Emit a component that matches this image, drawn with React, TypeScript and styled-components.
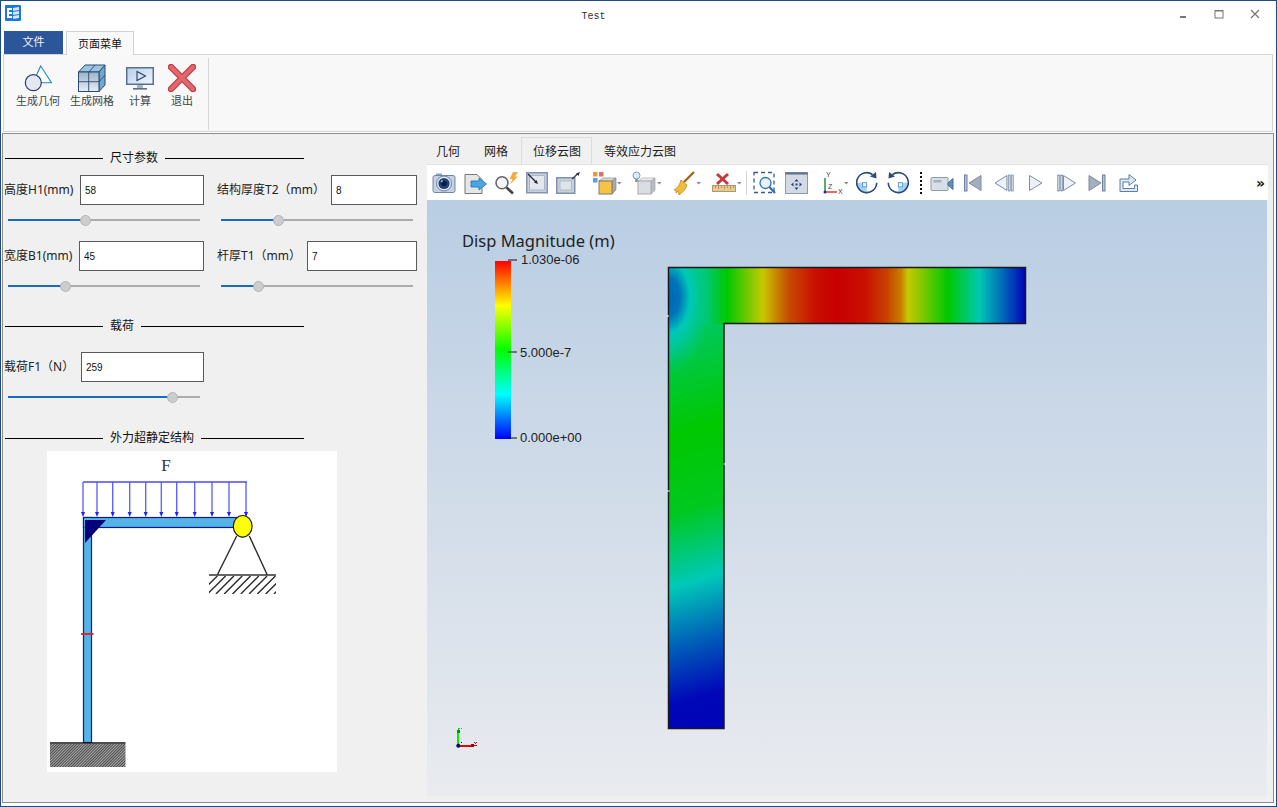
import React from 'react'
import styled, { createGlobalStyle } from 'styled-components'

const GlobalStyle = createGlobalStyle`
    html, body {
        margin: 0;
        padding: 0;
        overflow: hidden;
        background: #fff;
    }
    body {
        font-family: "Liberation Sans", "Noto Sans CJK SC", sans-serif;
    }
`;

const Frame = styled.div`
    width: 1277px;
    height: 807px;
    box-sizing: border-box;
    border: 1px solid #1d4a80;
    background: #fff;
    display: flex;
    flex-direction: column;
    color: #222;
`;

const TitleBar = styled.div`
    height: 30px;
    flex: none;
    display: flex;
`;

const AppIcon = styled.svg`
    width: 16px;
    height: 16px;
    margin: 4px 1px 0 4px;
`;

const WindowTitle = styled.div`
    flex: 1;
    text-align: center;
    font-family: "Liberation Mono", monospace;
    font-size: 10px;
    line-height: 30px;
    padding-top: 1px;
    color: #333;
`;

const WindowButtons = styled.div`
    display: flex;
    margin-right: 3px;
`;

const WindowButton = styled.div`
    width: 36px;
    height: 26px;
    display: flex;
    align-items: center;
    justify-content: center;
`;

const MenuTabs = styled.div`
    height: 24px;
    flex: none;
    display: flex;
    gap: 3px;
    padding-left: 3px;
    position: relative;
    z-index: 1;
`;

const FileTab = styled.div`
    width: 59px;
    height: 23px;
    background: #2b579a;
    color: #f4f4f4;
    font-size: 11px;
    line-height: 23px;
    text-align: center;
`;

const PageTab = styled.div`
    width: 68px;
    height: 24px;
    box-sizing: border-box;
    border: 1px solid #d2d2d2;
    border-bottom: none;
    background: #f9f9f9;
    color: #111;
    font-size: 11px;
    line-height: 24px;
    text-align: center;
`;

const Ribbon = styled.div`
    height: 78px;
    flex: none;
    box-sizing: border-box;
    margin: -1px 3px 0 2px;
    border: 1px solid #d2d2d2;
    background: #f8f8f8;
    display: flex;
    padding: 3px 0 0 7px;
`;

const RibbonButton = styled.div<{ $w: number }>`
    width: ${p => p.$w}px;
    display: flex;
    flex-direction: column;
    align-items: center;
    padding-top: 6px;
    font-size: 11px;
    color: #444;
`;

const RibbonIcon = styled.svg`
    width: 28px;
    height: 28px;
    margin-bottom: 2px;
`;

const RibbonLabel = styled.div`
    line-height: 14px;
    white-space: nowrap;
`;

const RibbonSep = styled.div`
    width: 1px;
    height: 72px;
    margin-left: 5px;
    background: #d6d6d6;
`;

const Body = styled.div`
    flex: 1;
    min-height: 0;
    margin: 1px 2px 3px 1px;
    border: 1px solid #8c8c8c;
    background: #f0f0f0;
    display: flex;
`;

const LeftPanel = styled.div`
    width: 421px;
    flex: none;
    box-sizing: border-box;
    padding: 16px 0 0 1px;
`;

const SectionTitle = styled.div<{ $mt?: number }>`
    width: 299px;
    height: 16px;
    margin: ${p => p.$mt ?? 0}px 0 0 1px;
    display: flex;
    align-items: center;
    font-size: 12px;
    color: #111;
`;

const TitleLeadLine = styled.div`
    width: 98px;
    height: 1px;
    background: #000;
`;

const TitleLine = styled.div`
    flex: 1;
    height: 1px;
    background: #000;
`;

const TitleText = styled.span`
    margin: 0 7px;
    line-height: 16px;
`;

const ParamRow = styled.div<{ $mt: number }>`
    display: flex;
    gap: 13px;
    margin-top: ${p => p.$mt}px;
`;

const Field = styled.div`
    width: 200px;
    height: 30px;
    display: flex;
    align-items: center;
    justify-content: space-between;
    font-family: "Noto Sans", "Noto Sans CJK SC", sans-serif;
    font-size: 12px;
    color: #222;
    white-space: nowrap;
`;

const FieldLabel = styled.span`
    line-height: 16px;
    margin-bottom: 1px;
`;

const ValueInput = styled.input<{ $w: number }>`
    width: ${p => p.$w}px;
    height: 30px;
    box-sizing: border-box;
    border: 1px solid #5a5a5a;
    border-radius: 0;
    outline: none;
    padding: 0 0 0 4px;
    background: #fff;
    font-family: "Liberation Sans", sans-serif;
    font-size: 10px;
    color: #111;
`;

const SliderRow = styled.div<{ $mt: number }>`
    display: flex;
    gap: 13px;
    margin-top: ${p => p.$mt}px;
`;

const SliderTrack = styled.div`
    position: relative;
    width: 192px;
    height: 2px;
    margin: 5px 4px;
    background: #ababab;
`;

const SliderFill = styled.div<{ $at: number }>`
    width: ${p => p.$at}px;
    height: 2px;
    background: #1a6bb8;
`;

const SliderHandle = styled.div<{ $at: number }>`
    position: absolute;
    left: ${p => p.$at - 5.5}px;
    top: -4.5px;
    width: 11px;
    height: 11px;
    box-sizing: border-box;
    border-radius: 50%;
    border: 1px solid #b4b4b4;
    background: #cdcdcd;
`;

const Diagram = styled.svg`
    display: block;
    width: 290px;
    height: 321px;
    margin: 5px 0 0 43px;
    background: #fff;
`;

const RightPanel = styled.div`
    flex: 1;
    min-width: 0;
    display: flex;
    flex-direction: column;
`;

const TabBar = styled.div`
    height: 27px;
    margin-top: 3px;
    display: flex;
    flex: none;
`;

const ViewTab = styled.div<{ $active?: boolean }>`
    box-sizing: border-box;
    margin-left: ${p => (p.$active ? 1 : 0)}px;
    padding: 1px ${p => (p.$active ? 10 : 11)}px 0 11px;
    border: 1px solid ${p => (p.$active ? '#dcdcdc' : 'transparent')};
    border-bottom: none;
    font-size: 12px;
    line-height: 26px;
    color: #222;
`;

const Pane = styled.div`
    width: 841px;
    margin-left: 3px;
    border-top: 1px solid #e2e2e2;
`;

const Toolbar = styled.div`
    height: 35px;
    background: #fff;
    display: flex;
    align-items: center;
    padding-left: 5px;
    padding-right: 3px;
`;

const ToolIcon = styled.svg<{ $w: number; $ml: number }>`
    flex: none;
    width: ${p => p.$w}px;
    height: 25px;
    margin-left: ${p => p.$ml}px;
`;

const ToolSep = styled.div<{ $ml: number }>`
    flex: none;
    width: 1px;
    height: 24px;
    margin-left: ${p => p.$ml}px;
    background: #d4d4d4;
`;

const DottedSep = styled.div<{ $ml: number }>`
    flex: none;
    width: 2px;
    height: 22px;
    margin-left: ${p => p.$ml}px;
    background: repeating-linear-gradient(to bottom, #111 0, #111 2px, transparent 2px, transparent 4px);
`;

const MoreButton = styled.div`
    margin-left: auto;
    font-family: "DejaVu Sans", sans-serif;
    font-size: 14px;
    line-height: 14px;
    font-weight: bold;
    color: #111;
`;

const Viewport = styled.div`
    width: 840px;
    height: 596px;
    background: linear-gradient(to bottom, #b9cde3 0%, #e9ebef 100%);
`;

const PlotSvg = styled.svg`
    display: block;
    width: 840px;
    height: 596px;
`;

const Slider: React.FC<{ handle: number }> = ({ handle }) => {
    // handle is measured from the start of the track
    return (
        <SliderTrack>
            <SliderFill $at={handle} />
            <SliderHandle $at={handle} />
        </SliderTrack>
    )
}

const Section: React.FC<{ text: string; mt?: number }> = ({ text, mt }) => (
    <SectionTitle $mt={mt}>
        <TitleLeadLine />
        <TitleText>{text}</TitleText>
        <TitleLine />
    </SectionTitle>
)

const Arrowed: React.FC<{ fill?: string }> = ({ fill = '#8a8a8a' }) => (
    <polygon points="25,12 29.5,12 27.25,14.5" fill={fill} />
)

const toolIcons = {
    camera: (
        <>
            <rect x="4" y="3.5" width="6" height="2.5" fill="#8fa3bd" />
            <rect x="1" y="5.5" width="22" height="17" rx="2" fill="#c6d2e2" stroke="#7088a8" />
            <circle cx="12" cy="13.5" r="7.5" fill="#e2e9f2" stroke="#6a82a4" />
            <circle cx="12" cy="13.5" r="5.6" fill="#24427a" />
            <circle cx="12" cy="13.5" r="2.8" fill="#0c1c40" />
            <circle cx="9.8" cy="11.2" r="1" fill="#9fc0e8" />
        </>
    ),
    exportImage: (
        <>
            <path d="M1 4.5 H13 L18 9.5 V23.5 H1 Z" fill="#e6e6e6" stroke="#777" />
            <path d="M7 11 H15 V8 L22.5 14 L15 20 V17 H7 Z" fill="#4aa5e2" stroke="#2f80bb" />
        </>
    ),
    boltSearch: (
        <>
            <circle cx="7" cy="12.7" r="6" fill="#f2f5f9" stroke="#666" strokeWidth="1.6" />
            <line x1="11.5" y1="17.5" x2="18" y2="23.5" stroke="#444" strokeWidth="2.6" />
            <polygon points="18,2 23,2 20,6.5 23,6.5 15,14.5 17.5,9 14.5,9" fill="#f3ab40" />
        </>
    ),
    boxIn: (
        <>
            <rect x="0.75" y="2.75" width="20.5" height="20" fill="#c8d0dc" stroke="#8496b0" strokeWidth="1.5" />
            <rect x="3.5" y="5.5" width="15" height="14.5" fill="#e4e8ee" stroke="#a9b6c8" />
            <line x1="2" y1="4" x2="10" y2="12" stroke="#223" strokeWidth="1.2" />
            <polygon points="12,14 8,12.5 10.5,10" fill="#223" />
        </>
    ),
    boxOut: (
        <>
            <rect x="0.75" y="7.75" width="18" height="15.5" fill="#c8d0dc" stroke="#7f93b0" strokeWidth="1.5" />
            <rect x="4" y="11" width="11.5" height="9" fill="#dfe4ea" stroke="#b0bac8" />
            <line x1="16" y1="9" x2="22" y2="3.5" stroke="#334" strokeWidth="1.2" />
            <polygon points="24,2 22.5,6 20,3.5" fill="#334" />
        </>
    ),
    colorCube: (
        <>
            <rect x="1" y="2" width="4.5" height="4.5" fill="#e89a3c" />
            <rect x="7" y="2" width="4.5" height="4.5" fill="#d9706c" />
            <rect x="1" y="8" width="4.5" height="4.5" fill="#5aa0e0" />
            <polygon points="7,11 11,8 24,8 20,11" fill="#dcdcdc" stroke="#888" strokeWidth="0.7" />
            <polygon points="20,11 24,8 24,20 20,24" fill="#a8a8a8" stroke="#888" strokeWidth="0.7" />
            <rect x="7" y="11" width="13" height="13" fill="#f6c440" stroke="#7a7a7a" />
            <Arrowed />
        </>
    ),
    bulbCube: (
        <>
            <polygon points="6,11 10,8 23,8 19,11" fill="#eceef2" stroke="#aaa" strokeWidth="0.7" />
            <polygon points="19,11 23,8 23,20 19,24" fill="#b8bcc4" stroke="#a0a0a0" strokeWidth="0.7" />
            <rect x="6" y="11" width="13" height="13" fill="#dadee4" stroke="#aaa" />
            <circle cx="4.5" cy="5.5" r="3.5" fill="#d8eefc" stroke="#7a9cc0" />
            <rect x="3.2" y="9" width="2.6" height="3" fill="#8a8a8a" />
            <Arrowed />
        </>
    ),
    broom: (
        <>
            <line x1="21" y1="2" x2="11" y2="12" stroke="#a5651e" strokeWidth="2.4" />
            <path d="M8 10 L14 15 C13 19 10 22 6 25 L5 21 L3 23 L3 20 L1 20 C5 18 7 14 8 10 Z" fill="#f0bc3c" stroke="#c08a20" strokeWidth="0.8" />
            <polygon points="23.5,12 28,12 25.75,14.5" fill="#8a8a8a" />
        </>
    ),
    ruler: (
        <>
            <line x1="5" y1="4" x2="16" y2="14" stroke="#c8383c" strokeWidth="3" />
            <line x1="16" y1="4" x2="5" y2="14" stroke="#c8383c" strokeWidth="3" />
            <rect x="0.5" y="15.5" width="23" height="6" fill="#e6ca92" stroke="#b09868" />
            <path d="M3.5 16 V18 M6.5 16 V19 M9.5 16 V18 M12.5 16 V19 M15.5 16 V18 M18.5 16 V19 M21.5 16 V18" stroke="#9a8050" strokeWidth="0.7" />
            <Arrowed />
        </>
    ),
    zoomBox: (
        <>
            <rect x="1" y="2.5" width="20" height="20" fill="none" stroke="#3a5a90" strokeWidth="1.3" strokeDasharray="4 3" />
            <circle cx="12.5" cy="13" r="5.5" fill="#e8f2fb" stroke="#2a70b8" strokeWidth="1.3" />
            <line x1="16.5" y1="17" x2="22" y2="23" stroke="#2a70b8" strokeWidth="2.2" />
        </>
    ),
    fit: (
        <>
            <rect x="0.5" y="2.5" width="22" height="21" fill="#d4dae4" stroke="#8a9ab0" />
            <rect x="0.5" y="2.5" width="22" height="2" fill="#5a7090" />
            <path d="M11.5 9 L13.5 11.5 H9.5 Z M11.5 20 L13.5 17.5 H9.5 Z M6 14.5 L8.5 12.5 V16.5 Z M17 14.5 L14.5 12.5 V16.5 Z" fill="#24427a" />
            <rect x="10.5" y="13.5" width="2" height="2" fill="#24427a" />
        </>
    ),
    axes: (
        <>
            <line x1="4" y1="8" x2="4" y2="22" stroke="#2a9a4a" strokeWidth="1.6" />
            <line x1="4" y1="22" x2="16" y2="22" stroke="#d83030" strokeWidth="1.4" />
            <circle cx="4" cy="22" r="1.5" fill="#2030a0" />
            <text x="5" y="7" fontSize="7" fill="#444" fontFamily="Liberation Sans">Y</text>
            <text x="7" y="19" fontSize="7" fill="#444" fontFamily="Liberation Sans">Z</text>
            <text x="17" y="24" fontSize="7" fill="#444" fontFamily="Liberation Sans">X</text>
            <polygon points="23,12 27.5,12 25.25,14.5" fill="#8a8a8a" />
        </>
    ),
    rotateCw: (
        <>
            <path d="M10.7 12.7 V22.7 A10 10 0 0 1 0.7 12.7 Z" fill="#a6d2f4" />
            <rect x="6.5" y="12.7" width="4.2" height="4.2" fill="#e8f4fc" stroke="#4a8ecc" strokeWidth="0.8" />
            <path d="M16.5 4.5 A10 10 0 1 0 20.7 12.7" fill="none" stroke="#2a4a78" strokeWidth="1.6" />
            <polygon points="20,2 20.5,8.5 14,6.5" fill="#2a4a78" />
        </>
    ),
    rotateCcw: (
        <>
            <path d="M11.3 12.7 V22.7 A10 10 0 0 0 21.3 12.7 Z" fill="#a6d2f4" />
            <rect x="11.3" y="12.7" width="4.2" height="4.2" fill="#e8f4fc" stroke="#4a8ecc" strokeWidth="0.8" />
            <path d="M5.5 4.5 A10 10 0 1 1 1.3 12.7" fill="none" stroke="#2a4a78" strokeWidth="1.6" />
            <polygon points="2,2 1.5,8.5 8,6.5" fill="#2a4a78" />
        </>
    ),
    movie: (
        <>
            <rect x="1" y="7.5" width="17" height="13" rx="1" fill="#dadfe6" stroke="#8a9ab0" />
            <rect x="3.5" y="10" width="8" height="2.5" fill="#a8b0bc" />
            <polygon points="18,13 23,8.5 23,19.5 18,15" fill="#5a90c0" stroke="#4a6a90" />
        </>
    ),
    first: (
        <>
            <rect x="0.5" y="5" width="2.5" height="16" fill="#b8c4d8" stroke="#6a80a8" />
            <polygon points="17,5.5 5,13 17,20.5" fill="#a4aebc" stroke="#7a8ca8" />
        </>
    ),
    prev: (
        <>
            <polygon points="13,5.5 1,13 13,20.5" fill="#eef1f5" stroke="#7a8ca8" />
            <rect x="14.5" y="5" width="1.8" height="16" fill="#cfd8e6" stroke="#7a8ca8" strokeWidth="0.7" />
            <rect x="17.5" y="5" width="1.8" height="16" fill="#cfd8e6" stroke="#7a8ca8" strokeWidth="0.7" />
        </>
    ),
    play: <polygon points="1.5,5.5 14,13 1.5,20.5" fill="#eef1f5" stroke="#7a8ca8" />,
    next: (
        <>
            <rect x="0.7" y="5" width="1.8" height="16" fill="#cfd8e6" stroke="#7a8ca8" strokeWidth="0.7" />
            <rect x="3.7" y="5" width="1.8" height="16" fill="#cfd8e6" stroke="#7a8ca8" strokeWidth="0.7" />
            <polygon points="6.5,5.5 18.5,13 6.5,20.5" fill="#eef1f5" stroke="#7a8ca8" />
        </>
    ),
    last: (
        <>
            <polygon points="1,5.5 13,13 1,20.5" fill="#a4aebc" stroke="#7a8ca8" />
            <rect x="14.5" y="5" width="2.5" height="16" fill="#b8c4d8" stroke="#6a80a8" />
        </>
    ),
    share: (
        <path d="M2 21.5 V9 H11 V4.5 L18 10 L11 15.5 V12 H5 V18.5 H16.5 V15 H19.5 V21.5 Z" fill="#dce8f4" stroke="#5a7fa8" strokeLinejoin="round" />
    ),
};

type Tool = [keyof typeof toolIcons, number, number];

// width and left gap of each tool icon, read off the reference
const toolsA: Tool[] = [
    ['camera', 24, 0],
    ['exportImage', 23, 8],
    ['boltSearch', 23, 8],
    ['boxIn', 22, 8],
    ['boxOut', 24, 8],
    ['colorCube', 30, 12],
    ['bulbCube', 30, 10],
    ['broom', 30, 11],
    ['ruler', 30, 9],
];

const toolsB: Tool[] = [
    ['zoomBox', 23, 6],
    ['fit', 23, 9],
    ['axes', 29, 13],
    ['rotateCw', 22, 6],
    ['rotateCcw', 22, 9],
];

const toolsC: Tool[] = [
    ['movie', 24, 8],
    ['first', 18, 10],
    ['prev', 20, 12],
    ['play', 15, 14],
    ['next', 19, 14],
    ['last', 18, 12],
    ['share', 21, 12],
];

const renderTools = (list: Tool[]) =>
    list.map(([name, w, ml]) => (
        <ToolIcon key={name} $w={w} $ml={ml} viewBox={`0 0 ${w} 25`}>
            {toolIcons[name]}
        </ToolIcon>
    ))

const loadArrows = [83, 97, 112.7, 129.7, 145.7, 161.3, 176.7, 194.7, 212, 229, 246];
const hatchTops = [217.3, 225.6, 233.9, 242.2, 250.5, 258.8, 267.1, 275.4, 283.7, 292];

const StructureDrawing: React.FC = () => (
    <Diagram viewBox="47 451 290 321">
        <defs>
            <pattern id="groundHatch" width="2" height="2" patternUnits="userSpaceOnUse" patternTransform="rotate(45)">
                <rect width="2" height="2" fill="#a8a8a8" />
                <rect width="1" height="2" fill="#4a4a4a" />
            </pattern>
            <clipPath id="hatchClip">
                <rect x="209" y="576" width="67" height="18" />
            </clipPath>
        </defs>
        <text x="166" y="471" textAnchor="middle" fontFamily="Liberation Serif" fontSize="17" fill="#333">F</text>
        <line x1="83" y1="482" x2="247" y2="482" stroke="#4848ff" strokeWidth="1.4" />
        {loadArrows.map(x => (
            <g key={x}>
                <line x1={x} y1="482" x2={x} y2="513" stroke="#5a5aff" strokeWidth="1.3" />
                <polygon points={`${x - 2},512 ${x + 2},512 ${x},517`} fill="#2020ff" />
            </g>
        ))}
        <rect x="83.5" y="517.5" width="8" height="225" fill="#55b4e6" stroke="#101a90" strokeWidth="1.2" />
        <rect x="83.5" y="517.5" width="158" height="10" fill="#55b4e6" stroke="#101a90" strokeWidth="1.2" />
        <rect x="84.5" y="518.5" width="6.5" height="10" fill="#55b4e6" />
        <polygon points="85,520 106,520 85,543" fill="#00007c" />
        <line x1="81" y1="634" x2="93.5" y2="634" stroke="#f01818" strokeWidth="1.8" />
        <line x1="236.7" y1="536" x2="217.3" y2="575" stroke="#2a2a2a" strokeWidth="1.4" />
        <line x1="249.3" y1="536" x2="267.3" y2="575" stroke="#2a2a2a" strokeWidth="1.4" />
        <ellipse cx="242.7" cy="526.3" rx="9.4" ry="10.8" fill="#ffff00" stroke="#222" strokeWidth="1.2" />
        <line x1="209" y1="575" x2="276" y2="575" stroke="#333" strokeWidth="1.5" />
        <g clipPath="url(#hatchClip)">
            {hatchTops.map(x => (
                <line key={x} x1={x} y1="576" x2={x - 18} y2="594" stroke="#2a2a2a" strokeWidth="1.4" />
            ))}
        </g>
        <line x1="50" y1="743" x2="125.5" y2="743" stroke="#111" strokeWidth="1.6" />
        <rect x="50" y="744" width="75.5" height="23" fill="url(#groundHatch)" />
    </Diagram>
)

const ContourPlot: React.FC = () => (
    <PlotSvg viewBox="427 200 840 596">
        <defs>
            <linearGradient id="legendRamp" x1="0" y1="0" x2="0" y2="1">
                <stop offset="0" stopColor="#ff0000" />
                <stop offset="0.25" stopColor="#ffff00" />
                <stop offset="0.5" stopColor="#00ff00" />
                <stop offset="0.75" stopColor="#00ffff" />
                <stop offset="1" stopColor="#0000ff" />
            </linearGradient>
            <linearGradient id="beamRamp" gradientUnits="userSpaceOnUse" x1="668" y1="0" x2="1026" y2="0">
                <stop offset="0" stopColor="#00c8b4" />
                <stop offset="0.1" stopColor="#00c880" />
                <stop offset="0.165" stopColor="#00c800" />
                <stop offset="0.265" stopColor="#c8c800" />
                <stop offset="0.31" stopColor="#c87800" />
                <stop offset="0.34" stopColor="#c84800" />
                <stop offset="0.41" stopColor="#c81000" />
                <stop offset="0.47" stopColor="#c80000" />
                <stop offset="0.55" stopColor="#c81000" />
                <stop offset="0.61" stopColor="#c84000" />
                <stop offset="0.65" stopColor="#c87c00" />
                <stop offset="0.67" stopColor="#c8c800" />
                <stop offset="0.78" stopColor="#00c800" />
                <stop offset="0.87" stopColor="#00c8b4" />
                <stop offset="0.93" stopColor="#0070b8" />
                <stop offset="1" stopColor="#0000b8" />
            </linearGradient>
            <linearGradient id="columnRamp" gradientUnits="userSpaceOnUse" x1="696" y1="324" x2="817.8" y2="726">
                <stop offset="0" stopColor="#00c860" />
                <stop offset="0.24" stopColor="#00c800" />
                <stop offset="0.42" stopColor="#00c820" />
                <stop offset="0.585" stopColor="#00c8b8" />
                <stop offset="0.72" stopColor="#0060b8" />
                <stop offset="0.85" stopColor="#0008b8" />
                <stop offset="1" stopColor="#0000b8" />
            </linearGradient>
            <radialGradient id="cornerRamp" gradientUnits="userSpaceOnUse" cx="0" cy="0" r="1" gradientTransform="translate(668 297) scale(58 97)">
                <stop offset="0" stopColor="#0064b8" />
                <stop offset="0.2" stopColor="#0074b8" />
                <stop offset="0.38" stopColor="#00c8b8" />
                <stop offset="0.56" stopColor="#00c888" />
                <stop offset="0.8" stopColor="#00c860" stopOpacity="0" />
            </radialGradient>
            <clipPath id="frameClip">
                <path d="M668 267 H1026 V324 H724 V729 H668 Z" />
            </clipPath>
        </defs>

        <text x="462" y="246.5" fontFamily="Noto Sans" fontSize="16.5" fill="#222">Disp Magnitude (m)</text>
        <rect x="495" y="261" width="16" height="178" fill="url(#legendRamp)" />
        <line x1="508" y1="260" x2="517" y2="260" stroke="#111" />
        <line x1="508" y1="352" x2="517" y2="352" stroke="#111" />
        <line x1="508" y1="438" x2="517" y2="438" stroke="#111" />
        <text x="521" y="264" fontFamily="Liberation Sans" fontSize="13" fill="#222">1.030e-06</text>
        <text x="520" y="356.5" fontFamily="Liberation Sans" fontSize="13" fill="#222">5.000e-7</text>
        <text x="520" y="442" fontFamily="Liberation Sans" fontSize="13" fill="#222">0.000e+00</text>

        <g clipPath="url(#frameClip)">
            <rect x="668" y="267" width="358" height="57" fill="url(#beamRamp)" />
            <rect x="668" y="324" width="56" height="405" fill="url(#columnRamp)" />
            <ellipse cx="668" cy="297" rx="58" ry="97" fill="url(#cornerRamp)" />
        </g>
        <path d="M668.5 267.5 H1025.5 V323.5 H724 V728.5 H668.5 Z" fill="none" stroke="#1a1a1a" strokeWidth="1.5" />
        <rect x="666.5" y="315.5" width="2.5" height="1" fill="#fff" />
        <rect x="723.5" y="463.5" width="2.5" height="1" fill="#fff" />
        <rect x="667" y="490.5" width="2.5" height="1" fill="#fff" />

        <line x1="458" y1="745" x2="458" y2="730" stroke="#00f000" strokeWidth="2" />
        <rect x="457" y="730" width="3" height="3" fill="#009000" />
        <line x1="458" y1="746" x2="472" y2="746" stroke="#f00000" strokeWidth="2" />
        <line x1="472" y1="745.5" x2="477" y2="745.5" stroke="#d00000" strokeWidth="1" />
        <rect x="471" y="744" width="3" height="3" fill="#a00000" />
        <circle cx="458.3" cy="745.7" r="2" fill="#000080" />
        <path d="M458 728.5 h2 M458 729.5 h1 M461 728.5 h1" stroke="#00e000" strokeWidth="1" />
        <path d="M474 742.5 h1 M476 742.5 h1 M475 743.5 h1" stroke="#f00000" strokeWidth="1" />
        <path d="M461 742.5 h1" stroke="#0000c0" strokeWidth="1" />
    </PlotSvg>
)

const App: React.FC = () => {
    return (
        <Frame>
            <GlobalStyle />
            <TitleBar>
                <AppIcon viewBox="0 0 16 16">
                    <rect width="16" height="16" rx="1" fill="#1d76e4" />
                    <path d="M2 3 H7 V5 H4 V7 H7 V9 H4 V11 H7 V13 H2 Z" fill="#fff" />
                    <path d="M8 3 L14 2 V5 L8 6 Z M8 7 L14 6 V9 L8 10 Z M8 11 L14 10 V13 L8 14 Z" fill="#d8e8fb" />
                </AppIcon>
                <WindowTitle>Test</WindowTitle>
                <WindowButtons>
                    <WindowButton>
                        <svg width="10" height="10" viewBox="0 0 10 10"><rect x="2" y="7" width="6" height="2" fill="#777" /></svg>
                    </WindowButton>
                    <WindowButton>
                        <svg width="10" height="10" viewBox="0 0 10 10">
                            <rect x="1" y="1.5" width="8" height="7.5" fill="none" stroke="#777" />
                            <rect x="1" y="1" width="8" height="1.5" fill="#777" />
                        </svg>
                    </WindowButton>
                    <WindowButton>
                        <svg width="10" height="10" viewBox="0 0 10 10">
                            <path d="M1 1 L9 9 M9 1 L1 9" stroke="#777" strokeWidth="1.2" />
                        </svg>
                    </WindowButton>
                </WindowButtons>
            </TitleBar>

            <MenuTabs>
                <FileTab>文件</FileTab>
                <PageTab>页面菜单</PageTab>
            </MenuTabs>

            <Ribbon>
                <RibbonButton $w={54}>
                    <RibbonIcon viewBox="0 0 28 28">
                        <polygon points="16.7,2 27.5,18.7 9,18.7" fill="#fff" stroke="#1f8ac0" strokeWidth="1.1" />
                        <circle cx="9.3" cy="18.7" r="8" fill="#e4e8f0" stroke="#2b3f66" strokeWidth="1.2" />
                    </RibbonIcon>
                    <RibbonLabel>生成几何</RibbonLabel>
                </RibbonButton>
                <RibbonButton $w={54}>
                    <RibbonIcon viewBox="0 0 28 28">
                        <defs>
                            <linearGradient id="meshFront" x1="0" y1="0" x2="0" y2="1">
                                <stop offset="0" stopColor="#9db2c6" />
                                <stop offset="1" stopColor="#e8eef4" />
                            </linearGradient>
                        </defs>
                        <polygon points="0.5,8 7,1 27,1 21,8" fill="#9cc6de" stroke="#2a4a78" />
                        <polygon points="21,8 27,1 27,21 21,27.5" fill="#6fa8ca" stroke="#2a4a78" />
                        <rect x="0.5" y="8" width="20.5" height="19.5" fill="url(#meshFront)" stroke="#2a4a78" />
                        <path d="M10.7 8 V27.5 M0.5 17.7 H21 M11 8 L17 1 M21 17.7 L27 11" stroke="#2a4a78" fill="none" strokeWidth="0.9" />
                    </RibbonIcon>
                    <RibbonLabel>生成网格</RibbonLabel>
                </RibbonButton>
                <RibbonButton $w={42}>
                    <RibbonIcon viewBox="0 0 28 28">
                        <defs>
                            <linearGradient id="screenFill" x1="0" y1="0" x2="1" y2="1">
                                <stop offset="0" stopColor="#b4cfea" />
                                <stop offset="1" stopColor="#f2f7fc" />
                            </linearGradient>
                        </defs>
                        <rect x="0.75" y="3.75" width="26.5" height="16.5" fill="url(#screenFill)" stroke="#5a6f90" strokeWidth="1.5" />
                        <polygon points="11,7.5 19.5,12 11,16.5" fill="none" stroke="#2a3f70" strokeWidth="1.1" />
                        <rect x="11" y="21" width="6" height="3" fill="#a8b2c0" />
                        <rect x="7" y="24" width="14" height="1.6" fill="#5a6f90" />
                    </RibbonIcon>
                    <RibbonLabel>计算</RibbonLabel>
                </RibbonButton>
                <RibbonButton $w={42}>
                    <RibbonIcon viewBox="0 0 28 28">
                        <path d="M3 3 L25 25 M25 3 L3 25" stroke="#b5424a" strokeWidth="6.5" strokeLinecap="round" />
                        <path d="M3 3 L25 25 M25 3 L3 25" stroke="#e5666a" strokeWidth="4" strokeLinecap="round" />
                    </RibbonIcon>
                    <RibbonLabel>退出</RibbonLabel>
                </RibbonButton>
                <RibbonSep />
            </Ribbon>

            <Body>
                <LeftPanel>
                    <Section text="尺寸参数" />
                    <ParamRow $mt={9}>
                        <Field><FieldLabel>高度H1(mm)</FieldLabel><ValueInput $w={124} defaultValue="58" readOnly /></Field>
                        <Field><FieldLabel>结构厚度T2（mm）</FieldLabel><ValueInput $w={86} defaultValue="8" readOnly /></Field>
                    </ParamRow>
                    <SliderRow $mt={9}>
                        <Slider handle={77.7} />
                        <Slider handle={57.3} />
                    </SliderRow>
                    <ParamRow $mt={15}>
                        <Field><FieldLabel>宽度B1(mm)</FieldLabel><ValueInput $w={125} defaultValue="45" readOnly /></Field>
                        <Field><FieldLabel>杆厚T1（mm）</FieldLabel><ValueInput $w={110} defaultValue="7" readOnly /></Field>
                    </ParamRow>
                    <SliderRow $mt={9}>
                        <Slider handle={57.3} />
                        <Slider handle={37.3} />
                    </SliderRow>
                    <Section text="载荷" mt={26} />
                    <ParamRow $mt={18}>
                        <Field><FieldLabel>载荷F1（N）</FieldLabel><ValueInput $w={123} defaultValue="259" readOnly /></Field>
                    </ParamRow>
                    <SliderRow $mt={9}>
                        <Slider handle={164.3} />
                    </SliderRow>
                    <Section text="外力超静定结构" mt={27} />
                    <StructureDrawing />
                </LeftPanel>

                <RightPanel>
                    <TabBar>
                        <ViewTab>几何</ViewTab>
                        <ViewTab>网格</ViewTab>
                        <ViewTab $active>位移云图</ViewTab>
                        <ViewTab>等效应力云图</ViewTab>
                    </TabBar>
                    <Pane>
                        <Toolbar>
                            {renderTools(toolsA)}
                            <ToolSep $ml={4} />
                            {renderTools(toolsB)}
                            <DottedSep $ml={11} />
                            {renderTools(toolsC)}
                            <MoreButton>»</MoreButton>
                        </Toolbar>
                        <Viewport>
                            <ContourPlot />
                        </Viewport>
                    </Pane>
                </RightPanel>
            </Body>
        </Frame>
    )
}

export default App
